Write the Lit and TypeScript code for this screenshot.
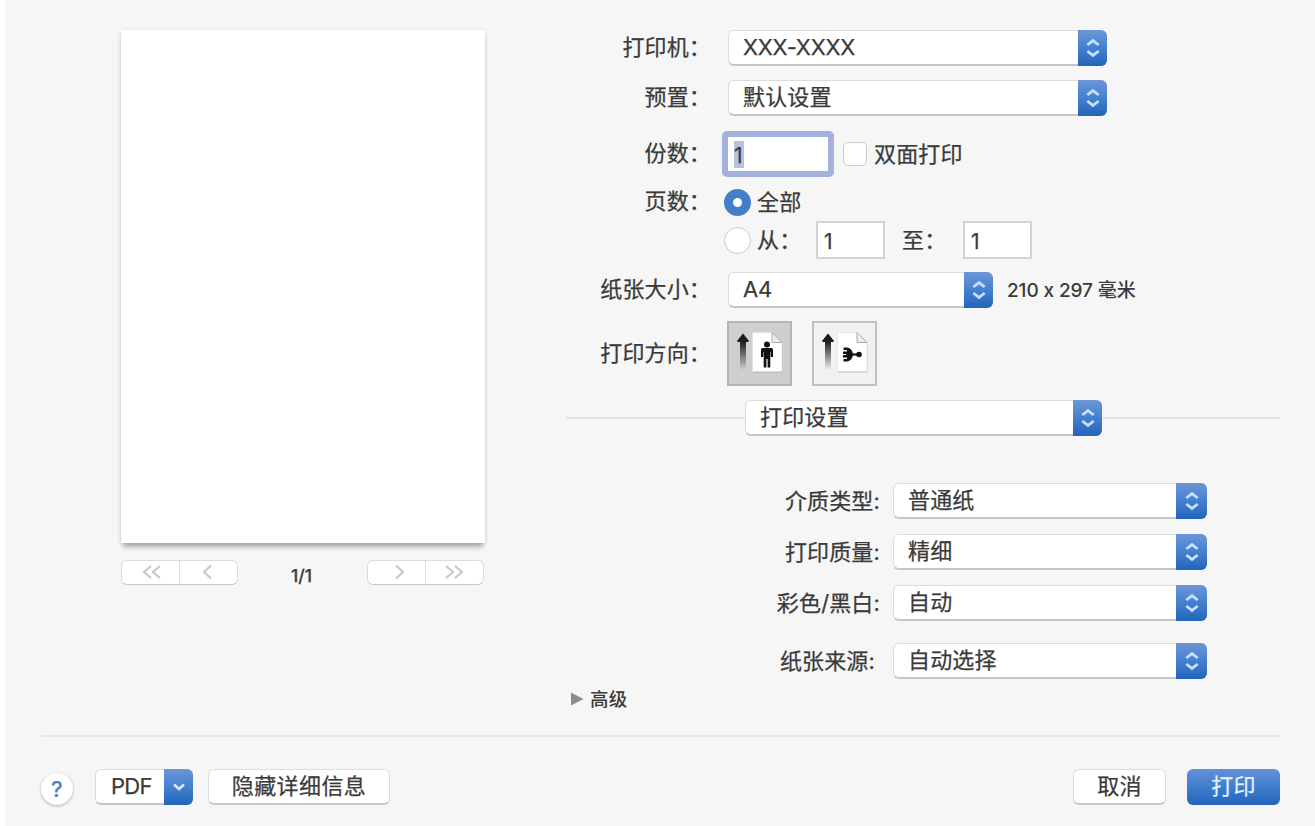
import { LitElement, html, css, svg } from "lit";
import { customElement, property } from "lit/decorators.js";

@customElement("mac-select")
class MacSelect extends LitElement {
  @property() value = "";
  @property({ type: Boolean }) down = false;
  static styles = css`
    :host { display: flex; box-sizing: border-box; height: 36px; border-radius: 6px; background: #fff; border: 1px solid #dcdcdc; border-bottom: 2px solid #c6c6c6; }
    .text { flex: 1; padding-left: 14px; line-height: 33px; white-space: nowrap; }
    .text.short { padding-left: 15px; }
    .cap { flex: none; width: var(--cap, 29px); height: 36px; margin: -1px -1px -2px 0; border-radius: 0 6px 6px 0; background: linear-gradient(#6c96d8, #4580ce 50%, #2264ba); display: flex; align-items: center; justify-content: center; }
    svg { display: block; }
  `;
  render() {
    return html`
      <div class="text ${this.down ? "short" : ""}">${this.value}</div>
      <div class="cap">
        ${this.down
          ? html`<svg width="14" height="10" viewBox="0 0 14 10" fill="none" stroke="#d9ecff" stroke-width="2.6"><path d="M2 2.5 7 7 12 2.5" /></svg>`
          : html`<svg width="16" height="20" viewBox="0 0 16 20" fill="none" stroke="#c6e0ff" stroke-width="2.8"><path d="M2.300 7 8 2.600 13.700 7M2.300 13 8 17.400 13.700 13" /></svg>`}
      </div>
    `;
  }
}

const portraitFigure = svg`
  <g fill="#111">
    <circle cx="7" cy="3" r="3" />
    <path d="M2.6 6.6h8.800q1.600 0 1.600 1.600v7.200h-2.200v-5h-.5V26H7.600v-8.500H6.400V26H3.700V10.400h-.5v5H1V8.200q0-1.600 1.600-1.600z" />
  </g>`;

const landscapeFigure = svg`
  <g fill="#111">
    <circle cx="16" cy="7" r="2.800" />
    <rect x="8" y="5.900" width="7" height="2.200" />
    <path d="M.5 0H4Q9.500 1 10 7 9.500 13 4 14H.5V11.600H4V9.900H0V7.600H3V6.400H0V4.100H4V2.400H.5Z" />
  </g>`;

@customElement("app-root")
class AppRoot extends LitElement {
  static styles = css`
    :host { display: block; width: 1315px; height: 826px; background: #fff; overflow: hidden; color: #3a3a3a; font: 400 22px/30px Inter, "Noto Sans CJK SC", sans-serif; letter-spacing: .15px; -webkit-text-stroke: .25px currentColor; }
    * { box-sizing: border-box; }
    svg { display: block; }
    .panel { height: 826px; margin-left: 5px; background: #f6f6f6; padding: 30px 35px 0 36px; display: flex; flex-direction: column; }
    .main { display: flex; height: 705px; }
    .preview { width: 363px; margin-left: 80px; }
    .sheet { width: 364px; height: 513px; background: #fff; box-shadow: 0 6px 5px -2px rgba(0,0,0,.28), 0 1px 5px rgba(0,0,0,.12); }
    .pager { display: flex; justify-content: space-between; margin-top: 17px; height: 25px; }
    .nav { display: flex; width: 117px; background: #fff; border: 1px solid #dcdcdc; border-bottom-color: #c8c8c8; border-radius: 6px; }
    .nav span { flex: 1; display: flex; align-items: center; justify-content: center; }
    .nav span + span { border-left: 1px solid #dedede; }
    .nav svg { margin-top: -2px; }
    .count { font-size: 17.500px; font-weight: 500; line-height: 32px; letter-spacing: 0; margin-right: 2px; }

    .form { width: 715px; margin-left: 82px; }
    .row { display: flex; align-items: center; height: 36px; }
    .row > .label { width: 146px; margin-right: 16px; text-align: right; flex: none; white-space: nowrap; position: relative; left: -1px; top: -1px; }
    .gap14 { margin-top: 14px; }
    .wide { width: 379px; }
    .printer { letter-spacing: -.2px; }
    .copies { margin-top: 14px; height: 47px; }
    .focus { width: 112px; height: 46px; margin-left: -6px; border: 6px solid #a3b1dc; border-radius: 5px; background: #fff; padding: 4px 0 0 6px; }
    .focus span { display: block; width: 10px; height: 27px; background: #b4c3e4; line-height: 30px; font-size: 21px; letter-spacing: -2px; }
    .check { width: 24px; height: 24px; margin: 0 7px 0 9px; background: #fff; border: 1.500px solid #cbcbcb; border-radius: 5px; }
    .pages { margin-top: 7px; }
    .radio { width: 27px; height: 27px; margin: 0 6px 0 -4px; border-radius: 50%; border: 1.500px solid #c8c8c8; background: #fff; flex: none; }
    .radio.on { border: 9px solid #427fcb; }
    .range { margin-top: 2px; }
    .range .from { width: 59px; }
    .box { width: 69px; height: 38px; background: #fff; border: 2px solid #d3d3d3; padding: 4px 0 0 6px; font-size: 21px; }
    .range .to { width: 61px; margin-left: 17px; }
    .paper { margin-top: 14px; }
    .paper mac-select { width: 265px; letter-spacing: -.3px; }
    .dim { margin-left: 14px; font-size: 19px; font-weight: 500; letter-spacing: -.1px; white-space: nowrap; -webkit-text-stroke: 0; padding-top: 1px; }
    .orient { height: 65px; margin-top: 13px; }
    .tile { width: 65px; height: 65px; border: 2px solid #c0c0c0; background: #f1f1f1; margin-right: 20px; }
    .tile.sel { background: #cfcfcf; border-color: #b4b4b4; margin-left: -1px; }
    .group { margin-top: 14px; }
    .rule { height: 2px; background: #e4e4e4; }
    .rule.left { width: 179px; }
    .rule.right { flex: 1; }
    .group mac-select { width: 357px; }
    .options { margin-top: 47px; }
    .options .row > .label { width: 315px; margin-right: 12px; top: 0; }
    .options mac-select { width: 314px; --cap: 31px; }
    .options .row + .row { margin-top: 15px; }
    .options .row + .row.source { margin-top: 22px; }
    .options .row.source > .label { width: 310px; margin-right: 17px; }
    .more { display: flex; align-items: center; gap: 6px; font-size: 18.500px; font-weight: 500; margin: 5px 0 0 4px; -webkit-text-stroke: 0; }

    .line { height: 2px; background: #e6e6e6; flex: none; margin-right: -1px; }
    .footer { display: flex; align-items: center; margin-top: 32px; height: 36px; }
    .help { width: 32px; height: 32px; margin-top: 4px; border-radius: 50%; background: #fff; box-shadow: 0 1px 3px rgba(0,0,0,.3); color: #4a85c9; text-align: center; line-height: 33px; font-weight: 500; }
    .pdf { width: 98px; margin: 0 15px 0 22px; letter-spacing: -.7px; }
    .btn { height: 36px; background: #fff; border: 1px solid #dcdcdc; border-bottom: 2px solid #c8c8c8; border-radius: 6px; text-align: center; line-height: 33px; }
    .details { width: 182px; margin-right: auto; letter-spacing: .4px; }
    .cancel { width: 93px; margin-right: 21px; }
    .print { width: 93px; border: 0; color: #e6f1ff; line-height: 35px; background: linear-gradient(#6391d6, #3f7dcc 50%, #2466bd); }
  `;

  nav(paths: string[]) {
    return html`<div class="nav">${paths.map(
      (d) => html`<span><svg width="22" height="16" viewBox="0 0 22 16" fill="none" stroke="#c8c8c8" stroke-width="2.200"><path d=${d} /></svg></span>`
    )}</div>`;
  }

  tile(selected: boolean) {
    const grad = selected ? "shaft-a" : "shaft-b";
    return html`<div class="tile ${selected ? "sel" : ""}">
      <svg width="61" height="61" viewBox="0 0 61 61">
        <defs><linearGradient id=${grad} x1="0" y1="0" x2="0" y2="1"><stop offset="0.2" stop-color="#1c1c1c" /><stop offset="1" stop-color="#1c1c1c" stop-opacity="0" /></linearGradient></defs>
        <path d="M14 11 20 19H17V47H11V19H8Z" fill="url(#${grad})" />
        <path d="M14 10.500 20 18H8Z" fill="#1c1c1c" />
        <path d="M24 11.500H43L53.500 22V49.500H24Z" fill="#999" opacity=".55" />
        <path d="M23.500 9.500H43L53 19.500V48.500H23.500Z" fill="#fff" stroke="#ddd" stroke-width=".6" />
        <path d="M43 9.500V19.500H53Z" fill="#eee" stroke="#aaa" />
        <g transform=${selected ? "translate(31 18.500)" : "translate(29 24.500)"}>${selected ? portraitFigure : landscapeFigure}</g>
      </svg></div>`;
  }

  option(label: string, value: string, extra = "") {
    return html`<div class="row ${extra}"><span class="label">${label}</span><mac-select value=${value}></mac-select></div>`;
  }

  render() {
    return html`<div class="panel">
      <div class="main">
        <div class="preview">
          <div class="sheet"></div>
          <div class="pager">
            ${this.nav(["M11 2 4 8 11 14M20 2 13 8 20 14", "M13 1.500 6 8 13 14.500"])}
            <span class="count">1/1</span>
            ${this.nav(["M10 1.500 17 8 10 14.500", "M2 2 9 8 2 14M11 2 18 8 11 14"])}
          </div>
        </div>
        <div class="form">
          <div class="row"><span class="label">打印机：</span><mac-select class="wide printer" value="XXX-XXXX"></mac-select></div>
          <div class="row gap14"><span class="label">预置：</span><mac-select class="wide" value="默认设置"></mac-select></div>
          <div class="row copies"><span class="label">份数：</span><div class="focus"><span>1</span></div><div class="check"></div><span>双面打印</span></div>
          <div class="row pages"><span class="label">页数：</span><div class="radio on"></div><span>全部</span></div>
          <div class="row range"><span class="label"></span><div class="radio"></div><span class="from">从：</span><div class="box">1</div><span class="to">至：</span><div class="box">1</div></div>
          <div class="row paper"><span class="label">纸张大小：</span><mac-select value="A4"></mac-select><span class="dim">210 x 297 毫米</span></div>
          <div class="row orient"><span class="label">打印方向：</span>${this.tile(true)}${this.tile(false)}</div>
          <div class="row group"><div class="rule left"></div><mac-select value="打印设置"></mac-select><div class="rule right"></div></div>
          <div class="options">
            ${this.option("介质类型:", "普通纸")}
            ${this.option("打印质量:", "精细")}
            ${this.option("彩色/黑白:", "自动")}
            ${this.option("纸张来源:", "自动选择", "source")}
          </div>
          <div class="more"><svg width="14" height="14" viewBox="0 0 14 14"><path d="M1 0.500 13.500 7 1 13.500Z" fill="#8c8c8c" /></svg>高级</div>
        </div>
      </div>
      <div class="line"></div>
      <div class="footer">
        <div class="help">?</div>
        <mac-select class="pdf" value="PDF" down></mac-select>
        <div class="btn details">隐藏详细信息</div>
        <div class="btn cancel">取消</div>
        <div class="btn print">打印</div>
      </div>
    </div>`;
  }
}
